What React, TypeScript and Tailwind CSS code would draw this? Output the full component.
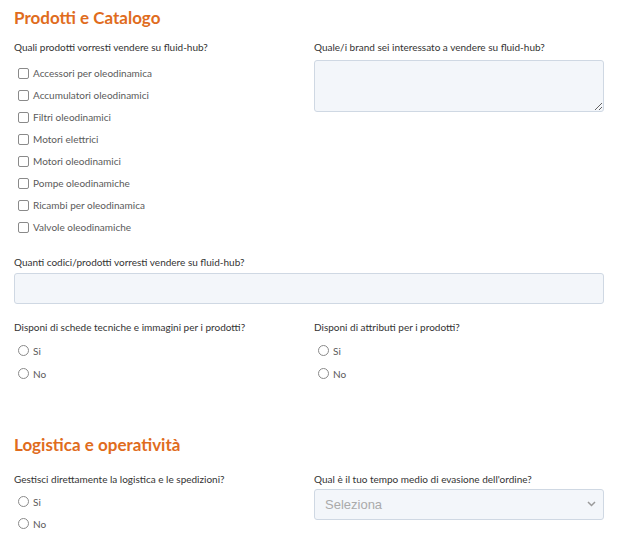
import React from 'react';

const prodotti = [
  'Accessori per oleodinamica',
  'Accumulatori oleodinamici',
  'Filtri oleodinamici',
  'Motori elettrici',
  'Motori oleodinamici',
  'Pompe oleodinamiche',
  'Ricambi per oleodinamica',
  'Valvole oleodinamiche',
];

function Label({ children }: { children: React.ReactNode }) {
  return <p className="text-[10px] leading-[14px] text-[#333333]">{children}</p>;
}

function Check({ label }: { label: string }) {
  return (
    <label className="flex items-center h-[22px]">
      <input
        type="checkbox"
        className="appearance-none w-[11px] h-[11px] ml-[4px] mr-[4px] border border-[#8a8a8a] rounded-[2px] bg-white"
      />
      <span className="text-[10px] text-[#5a5a5a] mt-[1px]">{label}</span>
    </label>
  );
}

function Radio({ name, label }: { name: string; label: string }) {
  return (
    <label className="flex items-center h-[22px]">
      <input
        type="radio"
        name={name}
        className="appearance-none w-[11px] h-[11px] ml-[4px] mr-[4px] border border-[#8a8a8a] rounded-full bg-white"
      />
      <span className="text-[10px] text-[#5a5a5a] mt-[3px]">{label}</span>
    </label>
  );
}

function SiNo({ name, gap }: { name: string; gap: string }) {
  return (
    <div className={gap}>
      <Radio name={name} label="Si" />
      <Radio name={name} label="No" />
    </div>
  );
}

export default function App() {
  return (
    <div className="min-h-screen bg-white px-[14px] pt-[8px] font-['Lato',sans-serif]">
      <h2 className="text-[17px] leading-[20px] font-bold text-[#e06c1d]">Prodotti e Catalogo</h2>

      <div className="grid grid-cols-2 gap-x-[10px] mt-[12px]">
        <div>
          <Label>Quali prodotti vorresti vendere su fluid-hub?</Label>
          <div className="mt-[8px] flex flex-col">
            {prodotti.map((p) => (
              <Check key={p} label={p} />
            ))}
          </div>
        </div>
        <div>
          <Label>Quale/i brand sei interessato a vendere su fluid-hub?</Label>
          <textarea className="block mt-[6px] w-full h-[52px] bg-[#f3f6fa] border border-[#cfd8e3] rounded-[3px]" />
        </div>
      </div>

      <div className="mt-[17px]">
        <Label>Quanti codici/prodotti vorresti vendere su fluid-hub?</Label>
        <input
          type="text"
          className="block mt-[4px] w-full h-[31px] bg-[#f3f6fa] border border-[#cfd8e3] rounded-[3px]"
        />
      </div>

      <div className="grid grid-cols-2 gap-x-[10px] mt-[16px]">
        <div>
          <Label>Disponi di schede tecniche e immagini per i prodotti?</Label>
          <div className="mt-[5px]">
            <SiNo name="schede" gap="flex flex-col gap-[1px]" />
          </div>
        </div>
        <div>
          <Label>Disponi di attributi per i prodotti?</Label>
          <div className="mt-[5px]">
            <SiNo name="attributi" gap="flex flex-col gap-[1px]" />
          </div>
        </div>
      </div>

      <h2 className="mt-[51px] text-[17px] leading-[20px] font-bold text-[#e06c1d]">Logistica e operatività</h2>

      <div className="grid grid-cols-2 gap-x-[10px] mt-[17px]">
        <div>
          <Label>Gestisci direttamente la logistica e le spedizioni?</Label>
          <div className="mt-[4px]">
            <SiNo name="logistica" gap="flex flex-col" />
          </div>
        </div>
        <div>
          <Label>Qual è il tuo tempo medio di evasione dell'ordine?</Label>
          <div className="relative mt-[3px]">
            <select
              defaultValue=""
              className="appearance-none block w-full h-[31px] pl-[10px] bg-[#f3f6fa] border border-[#cfd8e3] rounded-[3px] text-[13px] text-[#aaaaaa] font-['Liberation_Sans',sans-serif]"
            >
              <option value="">Seleziona</option>
            </select>
            <svg
              className="absolute right-[8px] top-[12px] w-[9px] h-[6px] pointer-events-none"
              viewBox="0 0 9 6"
              fill="none"
            >
              <path d="M1 1l3.5 3.5L8 1" stroke="#9a9a9a" strokeWidth="1.5" />
            </svg>
          </div>
        </div>
      </div>
    </div>
  );
}
